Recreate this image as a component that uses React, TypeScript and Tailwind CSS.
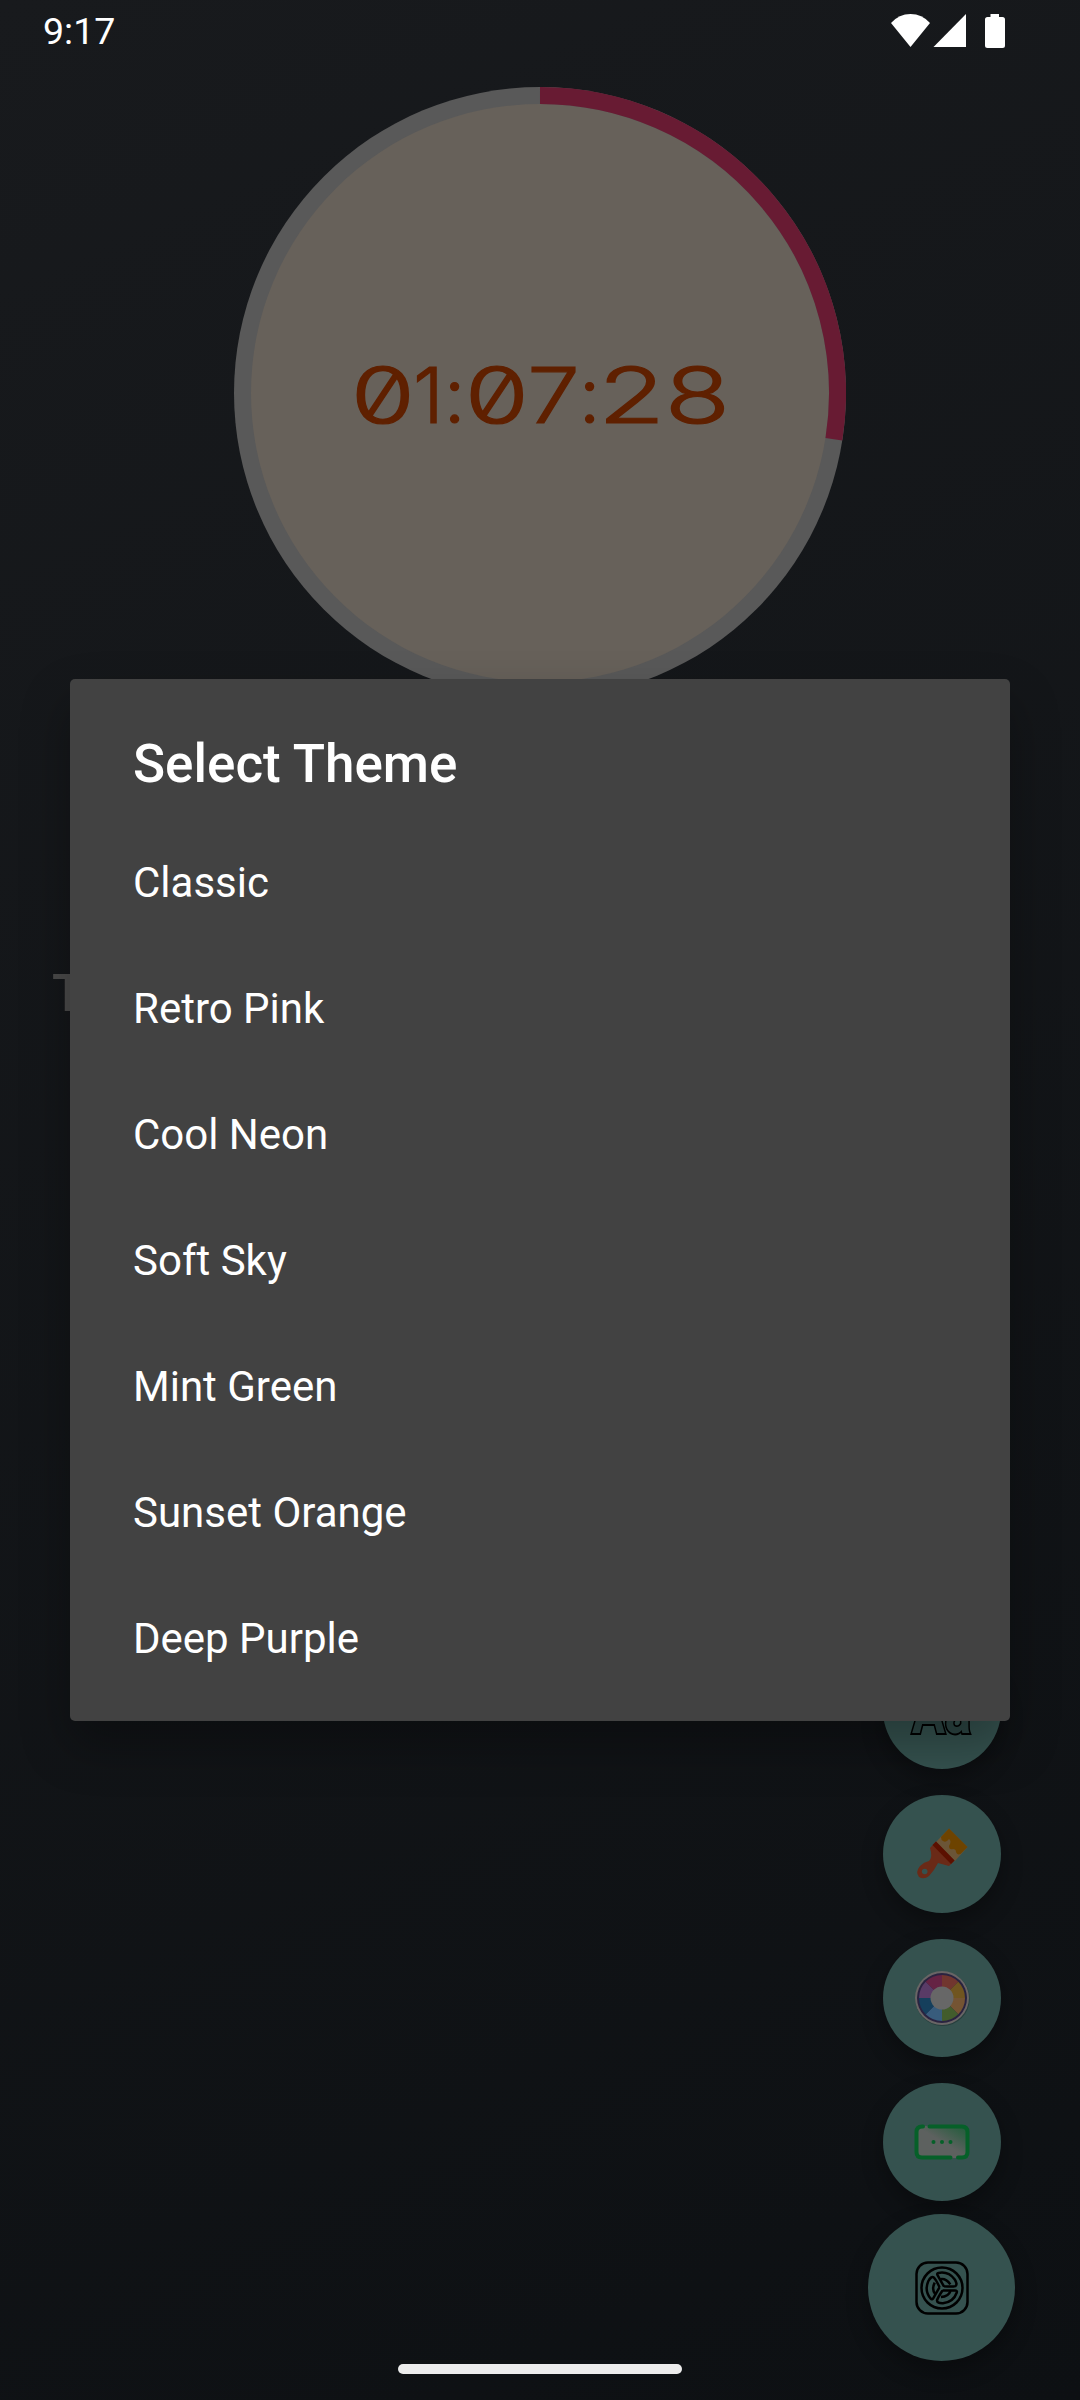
import React from "react";

const themes = ["Classic", "Retro Pink", "Cool Neon", "Soft Sky", "Mint Green", "Sunset Orange", "Deep Purple"];

function StatusBar() {
  return (
    <header className="flex h-[87px] shrink-0 items-start justify-between pl-[43px] pr-[75px]">
      <span className="mt-[9px] text-[37.5px] leading-[44px] text-white">9:17</span>
      <svg className="mt-[14px]" width="115" height="35" viewBox="890 14 115 35" fill="#fff">
        <path d="M891 23Q899 14 910.500 14Q922 14 930 23L910.500 47Z" />
        <path d="M933.500 47L966 14V47Z" />
        <path d="M990.500 14H999V17H1002.500Q1005 17 1005 19.500V45.500Q1005 48 1002.500 48H987.500Q985 48 985 45.500V19.500Q985 17 987.500 17H990.500Z" />
      </svg>
    </header>
  );
}

function Clock() {
  return (
    <div className="relative mx-auto h-[612px] w-[612px] shrink-0">
      <svg width="612" height="612" viewBox="0 0 612 612">
        <circle cx="306" cy="306" r="306" fill="#595959" />
        <circle cx="306" cy="306" r="289" fill="#67615a" />
        <path d="M306 8.500A297.500 297.500 0 0 1 599.900 352.300" fill="none" stroke="#681b33" strokeWidth="17" />
      </svg>
      <div className="absolute left-[120px] top-[269px] flex h-[78px] w-[373px] items-center font-['Inter'] text-[77px] font-light leading-[78px] text-[#5f2000] [-webkit-text-stroke:1.2px_#5f2000] [font-feature-settings:'zero']">
        <span className="flex w-[58px] justify-center"><span className="scale-x-[1.35]">0</span></span>
        <span className="ml-[4px] flex w-[25px] justify-center"><span className="scale-x-[1]">1</span></span>
        <span className="ml-[9px] flex w-[9px] justify-center">:</span>
        <span className="ml-[9px] flex w-[58px] justify-center"><span className="scale-x-[1.35]">0</span></span>
        <span className="ml-[3px] flex w-[50px] justify-center"><span className="scale-x-[1.22]">7</span></span>
        <span className="ml-[6px] flex w-[9px] justify-center">:</span>
        <span className="ml-[9px] flex w-[58px] justify-center"><span className="scale-x-[1.42]">2</span></span>
        <span className="ml-[8px] flex w-[58px] justify-center"><span className="scale-x-[1.39]">8</span></span>
      </div>
    </div>
  );
}

function Fab({ children }: { children: React.ReactNode }) {
  return (
    <button className="flex size-[118px] shrink-0 items-center justify-center rounded-full bg-[#35524f] shadow-[0_10px_22px_rgba(0,0,0,0.3)]">
      {children}
    </button>
  );
}

function BrushIcon() {
  return (
    <svg width="56" height="56" viewBox="914 1826 56 56">
      <path d="M949 1828.500L967.500 1847L955 1861L936 1842Z" fill="#6b5537" />
      <path d="M949 1828.500L967.500 1847L960.500 1854Q957 1855.500 956 1852Q956 1849 953 1849Q949 1850 949 1846Q952 1841 949 1839Q946 1843 943 1841Q941 1840 941 1837Z" fill="#6d4300" />
      <path d="M936 1841.500L954.500 1860.500L949 1866L938 1863Q934 1871 929 1876Q924 1880 919 1877Q915 1872 920 1866Q924 1862 929 1861Q933 1857 930 1848Z" fill="#6a2a17" />
      <path d="M936 1841.500L954.500 1860.500L951 1864L932.500 1845Z" fill="#5b1000" />
      <circle cx="924.700" cy="1871.500" r="2.800" fill="#35524f" />
    </svg>
  );
}

const wheel = ["#71362f", "#705520", "#755433", "#425c2c", "#385c7c", "#153f5c", "#593b66", "#652344"];

function WheelIcon() {
  const point = (a: number) => {
    const t = (a * Math.PI) / 180;
    return `${28 + 23 * Math.sin(t)} ${28 - 23 * Math.cos(t)}`;
  };
  return (
    <svg width="56" height="56" viewBox="0 0 56 56">
      <circle cx="28.500" cy="28.800" r="27.200" fill="#263f3d" />
      <circle cx="28" cy="28" r="27" fill="#696565" />
      <circle cx="28" cy="28" r="25" fill="#2a2340" />
      {wheel.map((c, i) => (
        <path key={c} d={`M28 28L${point(i * 45)}A23 23 0 0 1 ${point(i * 45 + 45)}Z`} fill={c} />
      ))}
      <circle cx="28" cy="28" r="11.500" fill="#676767" />
    </svg>
  );
}

function MessageIcon() {
  return (
    <svg width="56" height="36" viewBox="0 0 56 36">
      <defs>
        <linearGradient id="msg" x1="0" y1="1" x2="1" y2="0">
          <stop offset="0.5" stopColor="#5d615f" />
          <stop offset="1" stopColor="#1c5c38" />
        </linearGradient>
      </defs>
      <rect x="2" y="2" width="52" height="32" rx="5" fill="url(#msg)" />
      <g fill="none" stroke="#066029" strokeWidth="4" strokeLinecap="round">
        <path d="M9 2.500H8Q2.500 2.500 2.500 8V28Q2.500 33.500 8 33.500H36.500" />
        <path d="M15.500 2.500H48Q53.500 2.500 53.500 8V28Q53.500 33.500 48 33.500H44" />
      </g>
      <g fill="#066029">
        <circle cx="19.500" cy="18" r="2" />
        <circle cx="28" cy="18" r="2" />
        <circle cx="36.500" cy="18" r="2" />
      </g>
    </svg>
  );
}

function SettingsIcon() {
  return (
    <svg width="56" height="56" viewBox="-28 -28 56 56" fill="none" stroke="#000" strokeWidth="2.500">
      <rect x="-25.500" y="-25.500" width="51" height="51" rx="11.500" />
      <circle r="20.500" />
      {[0, 120, 240].map((r) => (
        <g key={r} transform={`rotate(${r})`}>
          <path d="M0.500 2.500H13Q15.500 2.500 14.800 4.500Q11.500 14 1 15.300Q-5 15.500 -5 12.500Q-4.500 10 0.500 2.500" strokeLinejoin="round" />
          <path d="M8.500 3Q6.500 8.500 -1 9" />
        </g>
      ))}
    </svg>
  );
}

export default function App() {
  return (
    <main className="relative flex h-[2400px] w-[1080px] flex-col overflow-hidden bg-[linear-gradient(156deg,#181a1d,#0d1013)] font-['Roboto',sans-serif]">
      <StatusBar />
      <Clock />
      <div className="mt-[263px] h-[62px] pl-[52px] text-[52.5px] font-medium leading-[62px] text-[#4a4a4a]">T</div>
      <div className="mt-[627px] mr-[65px] flex w-[147px] flex-col items-center gap-[26px] self-end">
        <Fab>
          <span className="mt-[20px] inline-block origin-bottom scale-y-[1.25] text-[49px] font-bold leading-[54px] text-[#2d4644] [-webkit-text-stroke:3px_#000] [paint-order:stroke]">Aa</span>
        </Fab>
        <Fab><BrushIcon /></Fab>
        <Fab><WheelIcon /></Fab>
        <Fab><MessageIcon /></Fab>
        <button className="-mt-[13px] flex size-[147px] shrink-0 items-center justify-center rounded-full bg-[#35524f] shadow-[0_10px_22px_rgba(0,0,0,0.3)]">
          <SettingsIcon />
        </button>
      </div>
      <div className="absolute left-[398px] top-[2364px] h-[10px] w-[284px] rounded-full bg-[#ececec]" />
      <section role="dialog" className="absolute left-[70px] top-[679px] h-[1042px] w-[940px] rounded-[5px] bg-[#424242] pt-[54px] text-white shadow-[0_24px_50px_rgba(0,0,0,0.3)]">
        <h1 className="h-[86px] px-[63px] text-[53px] font-medium leading-[62px]">Select Theme</h1>
        <ul>
          {themes.map((t) => (
            <li key={t} className="flex h-[126px] items-center px-[63px] text-[42px]">{t}</li>
          ))}
        </ul>
      </section>
    </main>
  );
}
